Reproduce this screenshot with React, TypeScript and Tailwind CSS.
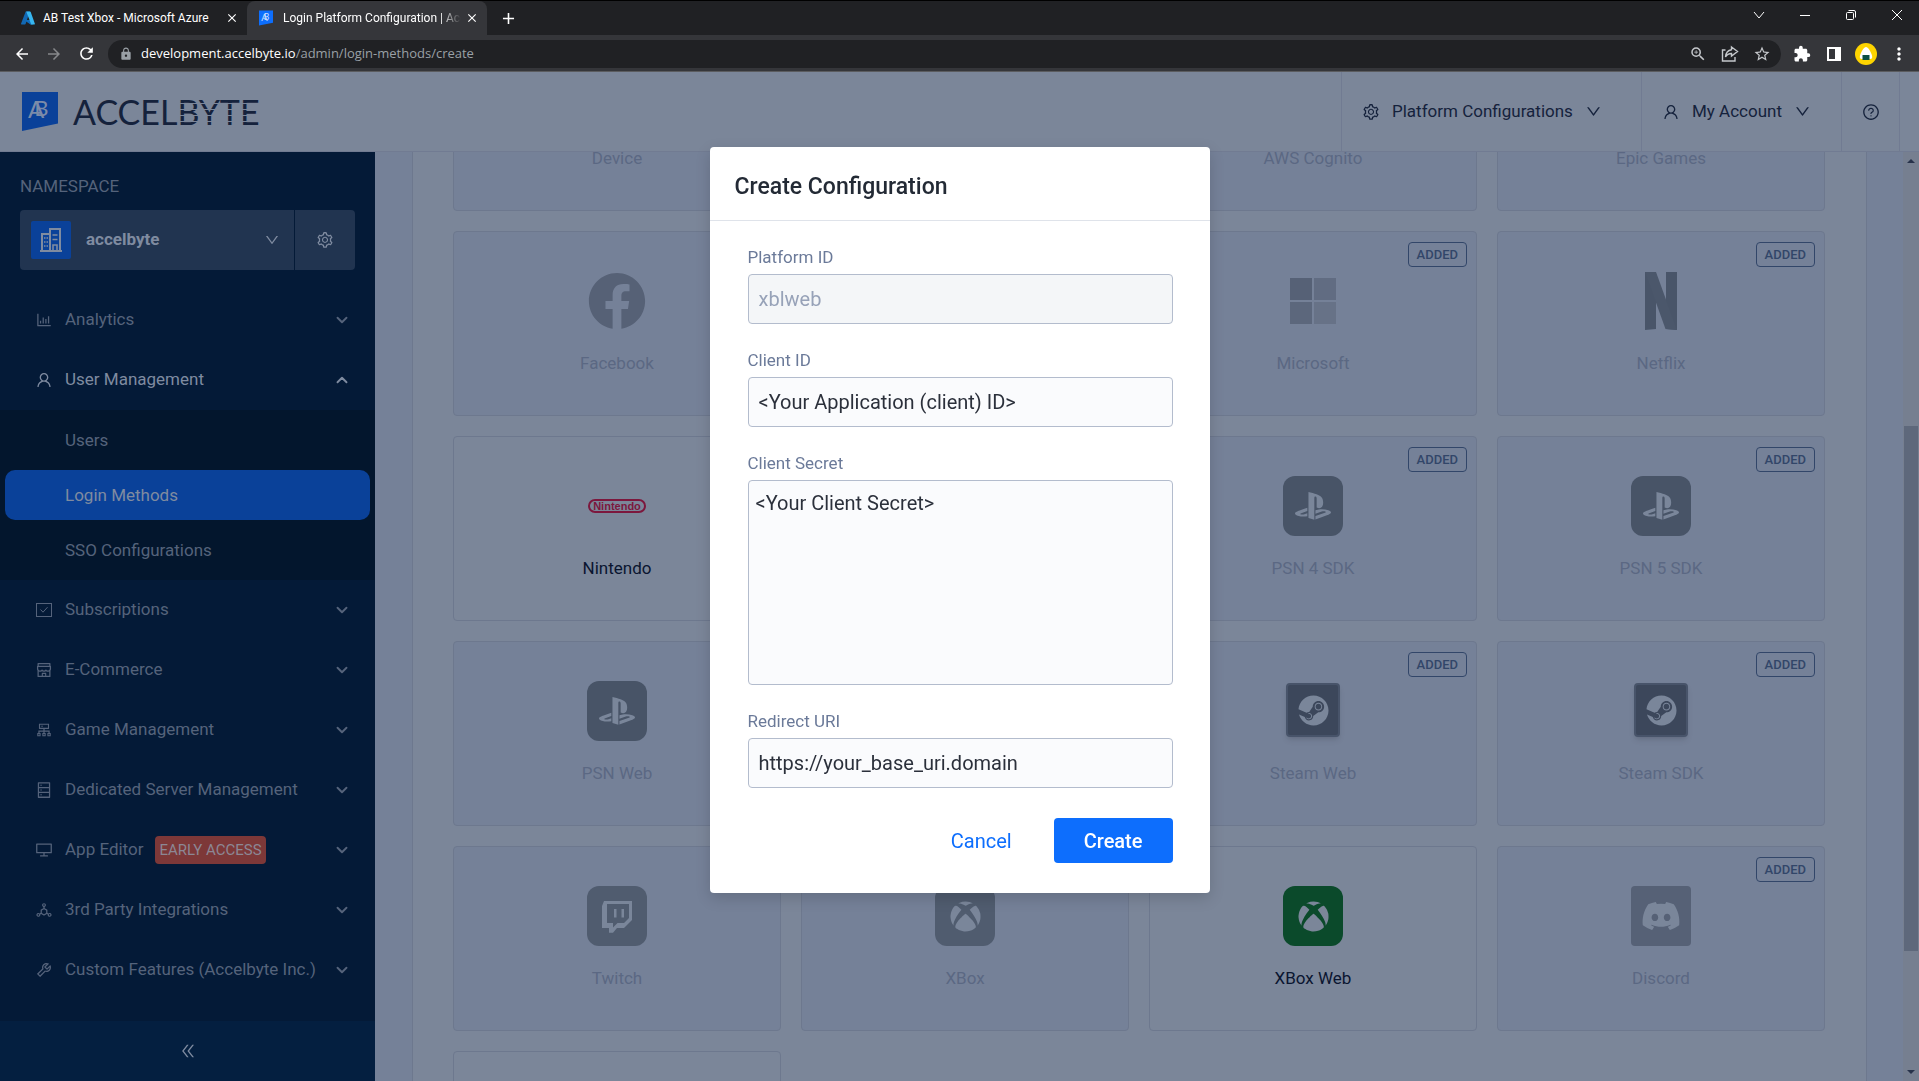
import type { ReactNode } from 'react';
import {
  AiOutlineBarChart,
  AiOutlineCluster,
  AiOutlineDatabase,
  AiOutlineDeploymentUnit,
  AiOutlineDesktop,
  AiOutlineDoubleLeft,
  AiOutlineDown,
  AiOutlineQuestionCircle,
  AiOutlineSetting,
  AiOutlineShop,
  AiOutlineTool,
  AiOutlineUser,
} from 'react-icons/ai';
import { FaDiscord, FaFacebook, FaPlaystation, FaSteam, FaXbox } from 'react-icons/fa';
import {
  MdArrowBack,
  MdArrowForward,
  MdClose,
  MdExtension,
  MdLock,
  MdMoreVert,
  MdOutlineZoomIn,
  MdRefresh,
  MdStarBorder,
  MdAdd,
} from 'react-icons/md';
import { ChevronDown, ChevronUp } from 'lucide-react';

interface Platform {
  name?: string;
  icon?: ReactNode;
  added?: boolean;
  available?: boolean;
}

interface MenuItem {
  label: string;
  icon: ReactNode;
  badge?: string;
}

function CheckBoxIcon() {
  return (
    <svg viewBox="0 0 16 16" className="h-4 w-4" fill="none" stroke="currentColor">
      <rect x="0.5" y="1.5" width="15" height="13" />
      <path d="M4.5 7.5L7 10.2L11.5 5.2" />
    </svg>
  );
}

function BuildingIcon() {
  return (
    <svg viewBox="0 0 22 24" className="h-6 w-[22px]" fill="none" stroke="currentColor" strokeWidth="2">
      <path d="M0 23H22M2 23V6H10M10 23V1H20V23" />
      <path d="M12.5 7H17.5M12.5 11.5H17.5M13 23V17H17V23" strokeWidth="1.6" />
      <path d="M4 10H5.5M6.5 10H8M4 14H5.5M6.5 14H8M4 18H5.5M6.5 18H8" strokeWidth="1.5" />
    </svg>
  );
}

function AzureIcon() {
  return (
    <svg viewBox="0 0 14 14" className="h-3.5 w-3.5">
      <path d="M4.7 0.5H8.8L4.6 13a.8.8 0 0 1-.7.5H.8a.7.7 0 0 1-.7-1z" fill="#1268b3" />
      <path d="M4.5 9H11l1 4.5H9.5L4 9.8z" fill="#0f6cbd" />
      <path d="M5.2.5H9a.8.8 0 0 1 .7.5l4.1 11.5a.7.7 0 0 1-.7 1H9.2a.7.7 0 0 0 .7-1z" fill="#37b6f0" />
    </svg>
  );
}

function LogoMark({ className, fill, ink }: { className: string; fill: string; ink: string }) {
  return (
    <svg viewBox="0 0 36 39" className={className}>
      <path d="M0 0H36V31.5L0 39Z" fill={fill} />
      <text x="6" y="26" fontFamily="Lato" fontSize="24" fill={ink}>
        A
        <tspan dx="-10" dy="-2" fontSize="22">
          B
        </tspan>
      </text>
    </svg>
  );
}

function Tile({ className, children }: { className: string; children: ReactNode }) {
  return <div className={`flex h-15 w-15 items-center justify-center rounded-xl ${className}`}>{children}</div>;
}

function PlaystationTile() {
  return (
    <Tile className="bg-[#485467] text-[#7a869a]">
      <FaPlaystation size={36} />
    </Tile>
  );
}

function SteamTile() {
  return (
    <div className="mb-0.5 flex h-[54px] w-[54px] items-center justify-center rounded border-2 border-[#48546a] bg-[#3c475b] text-[#7a869a] shadow-md">
      <FaSteam size={31} />
    </div>
  );
}

function TwitchTile() {
  return (
    <svg viewBox="0 0 60 60" className="h-15 w-15">
      <rect width="60" height="60" rx="12" fill="#505c6f" />
      <path d="M17 15H45V34L37 42H30L26 46.700H22V42H15V20Z" fill="#7a869a" />
      <path d="M20 18H42V32L37 37H30.500L26 41.500V37H20Z" fill="#505c6f" />
      <path d="M27 23H29.500V31.500H27ZM34.500 23H37V31.500H34.500Z" fill="#7a869a" />
    </svg>
  );
}

function MicrosoftIcon() {
  return (
    <div className="grid grid-cols-2 gap-0.5">
      <span className="h-[22px] w-[22px] bg-[#566176]" />
      <span className="h-[22px] w-[22px] bg-[#616c82]" />
      <span className="h-[22px] w-[22px] bg-[#5c677c]" />
      <span className="h-[22px] w-[22px] bg-[#677287]" />
    </div>
  );
}

function NetflixIcon() {
  return (
    <svg viewBox="0 0 32 58" className="h-[58px] w-8">
      <path d="M0 0H11V57L0 58ZM21 0H32V58L21 57Z" fill="#495569" />
      <path d="M0 0H11L32 58L20.500 57Z" fill="#4b576b" />
    </svg>
  );
}

function NintendoIcon() {
  return (
    <span className="flex h-3.5 w-[58px] items-center justify-center rounded-full border-2 border-[#7c173d] font-['Liberation_Sans'] text-[11px] leading-none font-bold text-[#7c173d]">
      Nintendo
    </span>
  );
}

// Cards without a name sit behind the dialog
const platforms: Platform[] = [
  { name: 'Device' },
  {},
  { name: 'AWS Cognito' },
  { name: 'Epic Games' },
  { name: 'Facebook', icon: <FaFacebook size={58} className="text-[#566176]" /> },
  {},
  { name: 'Microsoft', icon: <MicrosoftIcon />, added: true },
  { name: 'Netflix', icon: <NetflixIcon />, added: true },
  { name: 'Nintendo', icon: <NintendoIcon />, available: true },
  {},
  { name: 'PSN 4 SDK', icon: <PlaystationTile />, added: true },
  { name: 'PSN 5 SDK', icon: <PlaystationTile />, added: true },
  { name: 'PSN Web', icon: <PlaystationTile /> },
  {},
  { name: 'Steam Web', icon: <SteamTile />, added: true },
  { name: 'Steam SDK', icon: <SteamTile />, added: true },
  { name: 'Twitch', icon: <TwitchTile /> },
  {
    name: 'XBox',
    icon: (
      <Tile className="bg-[#505c6f] text-[#7a869a]">
        <FaXbox size={31} />
      </Tile>
    ),
  },
  {
    name: 'XBox Web',
    icon: (
      <Tile className="bg-[#0b4a2b] text-[#7b8699]">
        <FaXbox size={31} />
      </Tile>
    ),
    available: true,
  },
  {
    name: 'Discord',
    icon: (
      <div className="flex h-15 w-15 items-center justify-center rounded bg-[#566176] text-[#7a869a]">
        <FaDiscord size={40} />
      </div>
    ),
    added: true,
  },
  { available: true },
];

const menuTop: MenuItem[] = [{ label: 'Analytics', icon: <AiOutlineBarChart size={18} /> }];

const menuBottom: MenuItem[] = [
  { label: 'Subscriptions', icon: <CheckBoxIcon /> },
  { label: 'E-Commerce', icon: <AiOutlineShop size={18} /> },
  { label: 'Game Management', icon: <AiOutlineCluster size={18} /> },
  { label: 'Dedicated Server Management', icon: <AiOutlineDatabase size={18} /> },
  { label: 'App Editor', icon: <AiOutlineDesktop size={18} />, badge: 'EARLY ACCESS' },
  { label: '3rd Party Integrations', icon: <AiOutlineDeploymentUnit size={18} /> },
  { label: 'Custom Features (Accelbyte Inc.)', icon: <AiOutlineTool size={18} /> },
];

function BrowserChrome() {
  return (
    <div className="shrink-0 border-b border-[#5b5c5f] bg-[#35363a] text-white">
      <div className="flex h-[35px] border-t border-black bg-[#202124]">
        <div className="flex w-[247px] items-center pr-1 pl-[21px] text-xs">
          <AzureIcon />
          <span className="ml-2 flex-1 whitespace-nowrap">AB Test Xbox - Microsoft Azure</span>
          <button aria-label="Close tab" className="p-1">
            <MdClose size={14} />
          </button>
        </div>
        <div className="flex w-[240px] items-center rounded-t-lg bg-[#35363a] pr-1 pl-3 text-xs">
          <LogoMark className="h-4 w-3.5 shrink-0" fill="#0d6efd" ink="#cfe0ff" />
          <span className="ml-2.5 flex-1 overflow-hidden mask-r-from-88% whitespace-nowrap">
            Login Platform Configuration | AccelByte
          </span>
          <button aria-label="Close tab" className="p-1">
            <MdClose size={14} />
          </button>
        </div>
        <button aria-label="New tab" className="ml-3 self-center">
          <MdAdd size={19} />
        </button>
        <div className="ml-auto flex items-center gap-[34px] pr-4 pb-1.5">
          <button aria-label="Search tabs">
            <svg viewBox="0 0 12 12" className="h-3 w-3" fill="none" stroke="currentColor">
              <path d="M1 3L6 9L11 3" />
            </svg>
          </button>
          <button aria-label="Minimize">
            <svg viewBox="0 0 12 12" className="h-3 w-3" stroke="currentColor">
              <path d="M1 6.500H11" />
            </svg>
          </button>
          <button aria-label="Restore">
            <svg viewBox="0 0 12 12" className="h-3 w-3" fill="none" stroke="currentColor">
              <rect x="1.500" y="3.500" width="7" height="7" rx="1" />
              <path d="M3.500 1.500H9Q10.500 1.500 10.500 3V8.500" />
            </svg>
          </button>
          <button aria-label="Close window">
            <svg viewBox="0 0 12 12" className="h-3 w-3" stroke="currentColor">
              <path d="M1 1L11 11M11 1L1 11" />
            </svg>
          </button>
        </div>
      </div>
      <div className="flex h-9 items-center pt-px pr-2.5">
        <div className="flex w-[108px] items-center gap-3.5 pl-[13px]">
          <button aria-label="Back">
            <MdArrowBack size={18} />
          </button>
          <button aria-label="Forward" className="text-[#87888b]">
            <MdArrowForward size={18} />
          </button>
          <button aria-label="Reload">
            <MdRefresh size={19} />
          </button>
        </div>
        <div className="flex h-7 flex-1 items-center rounded-full bg-[#202124] pr-2.5 pl-[11px] text-[#c4c7cb]">
          <MdLock size={14} className="text-[#9aa0a6]" />
          <p className="ml-2 flex-1 font-['Open_Sans',sans-serif] text-[13px] text-[#9aa0a6]">
            <span className="text-white">development.accelbyte.io</span>/admin/login-methods/create
          </p>
          <div className="flex items-center gap-3.5">
            <MdOutlineZoomIn size={18} />
            <svg viewBox="0 0 18 18" className="h-[18px] w-[18px]" fill="none" stroke="currentColor" strokeWidth="1.400">
              <path d="M4.500 5H1.500V16H14V12" />
              <path d="M10.500 2L16.500 6.500L10.500 11V8.500Q6.500 8.500 4.500 12Q5 5.500 10.500 4.700Z" />
            </svg>
            <MdStarBorder size={18} />
          </div>
        </div>
        <div className="flex items-center gap-3 pl-3">
          <MdExtension size={18} />
          <svg viewBox="0 0 18 18" className="ml-0.5 h-[18px] w-[18px]">
            <path d="M2 2H16V16H2ZM4 4V14H10V4Z" fill="currentColor" fillRule="evenodd" />
          </svg>
          <svg viewBox="0 0 22 22" className="h-[22px] w-[22px]">
            <circle cx="11" cy="11" r="11" fill="#fdd400" />
            <path d="M11 4Q13.500 4 16.500 11Q18.500 16 15 16H7Q3.500 16 5.500 11Q8.500 4 11 4Z" fill="#fff" />
            <rect x="7.500" y="12" width="7" height="5" fill="#0b4f45" />
          </svg>
          <MdMoreVert size={20} />
        </div>
      </div>
    </div>
  );
}

function Header() {
  return (
    <header className="flex h-20 shrink-0 items-stretch border-b border-[#717b92] bg-[#7b8699] pr-[19px] text-[17px] text-[#15223c]">
      <a href="#" aria-label="AccelByte" className="mr-auto flex items-center pl-[22px]">
        <LogoMark className="h-[39px] w-9" fill="#0a4199" ink="#7b8ba9" />
        <span className="ml-[15px] flex font-['Lato',sans-serif] text-[34px] leading-10">
          ACCEL
          <span className="relative">
            BYTE
            <span className="absolute inset-0 bg-[repeating-linear-gradient(to_bottom,transparent_0px,transparent_5px,#7b8699_5px,#7b8699_6px)]" />
          </span>
        </span>
      </a>
      <button className="flex w-[300px] items-center border-l border-[#717b92] pl-5">
        <AiOutlineSetting size={18} />
        <span className="mr-3 ml-3">Platform Configurations</span>
        <AiOutlineDown size={17} />
      </button>
      <button className="flex w-[200px] items-center border-l border-[#717b92] pl-5">
        <AiOutlineUser size={18} />
        <span className="mr-3 ml-3">My Account</span>
        <AiOutlineDown size={17} />
      </button>
      <button aria-label="Help" className="flex w-[59px] items-center justify-center border-x border-[#717b92]">
        <AiOutlineQuestionCircle size={18} />
      </button>
    </header>
  );
}

function MenuRow({ item }: { item: MenuItem }) {
  return (
    <button className="flex h-15 w-full items-center pr-6 pl-[35px] text-[#55637b]">
      <span className="flex w-[18px] justify-center">{item.icon}</span>
      <span className="ml-3 whitespace-nowrap">{item.label}</span>
      {item.badge && (
        <span className="ml-3 rounded bg-[#7d3838] px-1 text-[15px] leading-7 text-[#8c8794]">{item.badge}</span>
      )}
      <ChevronDown size={18} strokeWidth={2.5} className="ml-auto" />
    </button>
  );
}

function Sidebar() {
  return (
    <aside className="flex w-[375px] shrink-0 flex-col bg-[#041a37] text-[17px]">
      <div className="px-5 pt-5">
        <p className="leading-7 text-[#55637b]">NAMESPACE</p>
        <div className="mt-2.5 flex h-15 gap-px text-[#7f8ba0]">
          <button className="flex flex-1 items-center rounded-l bg-[#213450] pr-3.5 pl-[11px]">
            <span className="flex h-[38px] w-10 items-center justify-center rounded-xs bg-[#0a4199]">
              <BuildingIcon />
            </span>
            <span className="ml-[15px] font-bold">accelbyte</span>
            <AiOutlineDown size={16} className="ml-auto" />
          </button>
          <button aria-label="Namespace settings" className="flex w-15 items-center justify-center rounded-r bg-[#213450]">
            <AiOutlineSetting size={18} />
          </button>
        </div>
      </div>
      <nav className="mt-5">
        {menuTop.map((item) => (
          <MenuRow key={item.label} item={item} />
        ))}
        <button className="flex h-15 w-full items-center pr-6 pl-[35px] text-[#7f8ba0]">
          <AiOutlineUser size={18} />
          <span className="ml-3">User Management</span>
          <ChevronUp size={18} strokeWidth={2.5} className="ml-auto" />
        </button>
        <div className="flex flex-col gap-[5px] bg-[#03162d] p-[5px] leading-[50px] text-[#55637b]">
          <a href="#" className="pl-15">
            Users
          </a>
          <a href="#" className="rounded-[10px] bg-[#0a4199] pl-15 text-[#7f8ba0]">
            Login Methods
          </a>
          <a href="#" className="pl-15">
            SSO Configurations
          </a>
        </div>
        {menuBottom.map((item) => (
          <MenuRow key={item.label} item={item} />
        ))}
      </nav>
      <button
        aria-label="Collapse sidebar"
        className="mt-auto flex h-15 items-center justify-center bg-[#041f40] text-[#7f8ba0]"
      >
        <AiOutlineDoubleLeft size={18} />
      </button>
    </aside>
  );
}

function PlatformCard({ platform }: { platform: Platform }) {
  const { name, icon, added, available } = platform;
  return (
    <div
      className={`relative flex h-[185px] flex-col items-center rounded border border-[#6d788e] pt-[39px] text-[17px] ${
        available ? 'text-[#0a1530]' : 'bg-[#758198] text-[#5b6883]'
      }`}
    >
      <div className="flex h-15 items-center">{icon}</div>
      <p className="mt-[18px] leading-7">{name}</p>
      {added && (
        <span className="absolute top-2.5 right-[9px] rounded border border-[#324669] px-2 text-[13px] leading-[23px] font-medium text-[#324669]">
          ADDED
        </span>
      )}
    </div>
  );
}

function Platforms() {
  return (
    <main className="flex-1 overflow-hidden bg-[#758198] pr-9 pl-[37px]">
      {/* list is scrolled part of the way down */}
      <div className="-mt-[126px] grid grid-cols-4 gap-5 border-x border-[#6d788e] bg-[#7b8699] pr-[41px] pl-10">
        {platforms.map((platform, i) => (
          <PlatformCard key={i} platform={platform} />
        ))}
      </div>
    </main>
  );
}

function ScrollBar() {
  return (
    <div className="flex w-4 shrink-0 flex-col items-center bg-[#767f90] text-[#27324a]">
      <svg viewBox="0 0 8 4" className="mt-[7px] h-1 w-2">
        <path d="M4 0L8 4H0Z" fill="currentColor" />
      </svg>
      <div className="mt-[263px] h-[525px] w-3.5 bg-[#5e687b]" />
      <svg viewBox="0 0 8 4" className="mt-auto mb-[7px] h-1 w-2">
        <path d="M0 0H8L4 4Z" fill="currentColor" />
      </svg>
    </div>
  );
}

function Field({ id, label, children }: { id: string; label: string; children: ReactNode }) {
  return (
    <div className="flex flex-col">
      <label htmlFor={id} className="mb-1 text-[17px] leading-[26px] text-[#6b7a99]">
        {label}
      </label>
      {children}
    </div>
  );
}

function CreateDialog() {
  return (
    <div className="fixed inset-0 flex items-start justify-center pt-[147px]">
      <div
        role="dialog"
        aria-labelledby="dialog-title"
        className="w-[500px] rounded bg-white text-[#2b303b] shadow-[0_5px_15px_rgba(0,0,0,0.15)]"
      >
        <h2
          id="dialog-title"
          className="border-b border-[#dfe3ea] px-[25px] pt-[23px] pb-[17px] text-[23px] leading-[33px] font-medium text-[#232a35]"
        >
          Create Configuration
        </h2>
        <form className="flex flex-col gap-[23px] pt-[23px] pr-[37px] pb-[30px] pl-[38px]">
          <Field id="platform-id" label="Platform ID">
            <input
              id="platform-id"
              disabled
              defaultValue="xblweb"
              className="h-[50px] rounded border border-[#b3bccd] bg-[#f4f6f8] px-2.5 text-xl text-[#97a2b8]"
            />
          </Field>
          <Field id="client-id" label="Client ID">
            <input
              id="client-id"
              defaultValue="<Your Application (client) ID>"
              className="h-[50px] rounded border border-[#b3bccd] bg-[#fafbfd] px-2.5 text-xl"
            />
          </Field>
          <Field id="client-secret" label="Client Secret">
            <textarea
              id="client-secret"
              defaultValue="<Your Client Secret>"
              className="h-[205px] resize-none rounded border border-[#b3bccd] bg-[#fafbfd] px-[7px] py-2 text-xl"
            />
          </Field>
          <Field id="redirect-uri" label="Redirect URI">
            <input
              id="redirect-uri"
              defaultValue="https://your_base_uri.domain"
              className="h-[50px] rounded border border-[#b3bccd] bg-[#fafbfd] px-2.5 text-xl"
            />
          </Field>
          <div className="mt-[7px] flex items-center justify-end gap-3 text-xl">
            <button type="button" className="h-[45px] px-[30px] text-[#0d6efd]">
              Cancel
            </button>
            <button type="button" className="h-[45px] rounded bg-[#0d6efd] px-[30px] font-medium text-white">
              Create
            </button>
          </div>
        </form>
      </div>
    </div>
  );
}

export default function App() {
  return (
    <div className="flex h-screen flex-col overflow-hidden font-['Roboto',sans-serif]">
      <BrowserChrome />
      <Header />
      <div className="flex min-h-0 flex-1">
        <Sidebar />
        <Platforms />
        <ScrollBar />
      </div>
      <CreateDialog />
    </div>
  );
}
